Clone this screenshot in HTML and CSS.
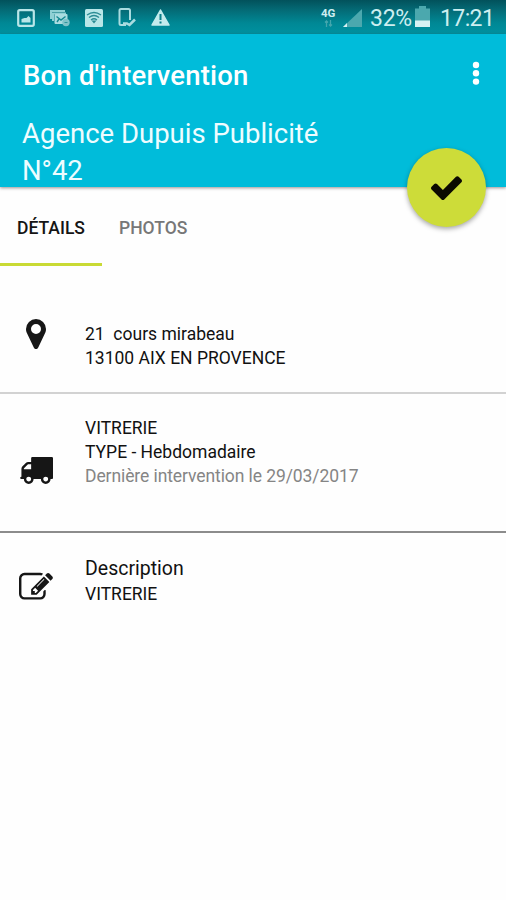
FILE: index.html
```html
<!DOCTYPE html>
<html lang="fr">
<head>
<meta charset="utf-8">
<title>Bon d'intervention</title>
<link rel="stylesheet" href="styles.css">
</head>
<body>
<div class="status">
  <div class="status-left">
    <svg width="18" height="18" viewBox="0 0 18 18"><rect x="1.2" y="1.2" width="15.6" height="15.6" rx="1.5" fill="none" stroke="#b9e6e8" stroke-width="2.2"/><path d="M4.500 13.500V10l3-1 2 0 2-2 2 2v4.500z" fill="#b9e6e8"/></svg>
    <svg width="20" height="18" viewBox="0 0 20 18"><path d="M1 10V2h14M3 12V4.500H16" fill="none" stroke="#8fd0d4" stroke-width="2"/><rect x="4.500" y="5" width="13" height="10" rx="1" fill="#a9dce0"/><path d="M6.500 7.500l4.500 3.500 4.500-3.500M7 13l2-3" fill="none" stroke="#168891" stroke-width="1.400"/><circle cx="16" cy="13.500" r="3.700" fill="#7fc3c9"/><path d="M14.500 13.500h3" stroke="#2e959d"/></svg>
    <svg width="18" height="18" viewBox="0 0 18 18"><rect width="18" height="18" rx="1.500" fill="#b9e6e8"/><path d="M2 6q7-5 14 0M4 8.500q5-4 10 0M6 11q3-2.500 6 0" fill="none" stroke="#2b8b94" stroke-width="1.300"/><path d="M6.500 11.500h5L9 14.500z" fill="#2b8b94"/></svg>
    <svg width="18" height="19" viewBox="0 0 18 19"><path d="M12 12V2.500Q12 1 10.500 1H3Q1.500 1 1.500 2.500v13Q1.500 17 3 17h5" fill="none" stroke="#a9dce0" stroke-width="2"/><path d="M5 15.500h4l2.500 1.500 5.500-5.500" fill="none" stroke="#a9dce0" stroke-width="2.500"/></svg>
    <svg width="19" height="17" viewBox="0 0 19 17"><path d="M9.500 1L18 16H1z" fill="#c3ebed" stroke="#c3ebed" stroke-width="1.500" stroke-linejoin="round"/><path d="M9.500 5v6M9.500 12.500v2" stroke="#087e89" stroke-width="2"/></svg>
  </div>
  <div class="status-right">
    <div class="network"><span>4G</span><svg width="9" height="7" viewBox="0 0 9 7"><path d="M2.500 7V1M1 2.500L2.500 1 4 2.500M6.500 0v6M5 4.500L6.500 6 8 4.500" fill="none" stroke="#43a6ad" stroke-width="1.300"/></svg></div>
    <svg class="signal" width="19" height="18" viewBox="0 0 19 18"><path d="M0 18L19 0v18z" fill="#4ba8ae"/><path d="M0 18l4-4v4z" fill="#d6f2f3"/></svg>
    <span class="percent">32%</span>
    <svg class="battery" width="15" height="21" viewBox="0 0 15 21"><path d="M0 2.500h4V0h7v2.500h4V21H0z" fill="#4ba8ae"/><path d="M0 14.500h15V21H0z" fill="#d6f2f3"/></svg>
    <span class="clock">17:21</span>
  </div>
</div>
<header class="appbar">
  <div class="toolbar">
    <h1 class="title">Bon d'intervention</h1>
    <svg class="more" width="8" height="24" viewBox="0 0 8 24" fill="#fff"><circle cx="4" cy="4" r="3.200"/><circle cx="4" cy="12.300" r="3.200"/><circle cx="4" cy="20.600" r="3.200"/></svg>
  </div>
  <div class="client"><span class="client-name">Agence Dupuis Publicité</span><br><span class="client-number">N°42</span></div>
  <div class="fab"><svg width="31" height="25" viewBox="121 270 1550 1252"><path d="M1671 566q0 40-28 68l-724 724-136 136q-28 28-68 28t-68-28l-136-136-362-362q-28-28-28-68t28-68l136-136q28-28 68-28t68 28l294 295 656-657q28-28 68-28t68 28l136 136q28 28 28 68z"/></svg></div>
</header>
<nav class="tabs">
  <div class="tab active"><span>DÉTAILS</span></div>
  <div class="tab"><span>PHOTOS</span></div>
</nav>
<main>
  <section class="row address">
    <div class="icon"><svg width="20" height="30" viewBox="384 128 1024 1536"><path d="M1152 640q0-106-75-181t-181-75-181 75-75 181 75 181 181 75 181-75 75-181zm256 0q0 109-33 179l-364 774q-16 33-47.500 52t-67.500 19-67.500-19-46.500-52l-365-774q-33-70-33-179 0-212 150-362t362-150 362 150 150 362z"/></svg></div>
    <div class="text"><div><span class="street">21&nbsp; cours mirabeau</span></div><div><span class="city">13100 AIX EN PROVENCE</span></div></div>
  </section>
  <section class="row job">
    <div class="icon"><svg width="34" height="27" viewBox="0 256 1792 1408" preserveAspectRatio="none"><path d="M640 1408q0-52-38-90t-90-38-90 38-38 90 38 90 90 38 90-38 38-90zm-384-512h384v-256h-158q-13 0-22 9l-195 195q-9 9-9 22v30zm1280 512q0-52-38-90t-90-38-90 38-38 90 38 90 90 38 90-38 38-90zm256-1088v1024q0 15-4 26.500t-13.500 18.500-16.500 11.500-23.500 6-22.500 2-25.500 0-22.500-.5q0 106-75 181t-181 75-181-75-75-181h-384q0 106-75 181t-181 75-181-75-75-181h-64q-3 0-22.500.5t-25.500 0-22.500-2-23.500-6-16.500-11.500-13.500-18.500-4-26.500q0-26 19-45t45-19v-320q0-8-.5-35t0-38 2.500-34.500 6.500-37 14-30.500 22.500-30l198-198q19-19 50.500-32t58.500-13h160v-192q0-26 19-45t45-19h1024q26 0 45 19t19 45z"/></svg></div>
    <div class="text"><div><span class="trade">VITRERIE</span></div><div><span class="type">TYPE - Hebdomadaire</span></div><div><span class="last">Dernière intervention le 29/03/2017</span></div></div>
  </section>
  <section class="row description">
    <div class="icon"><svg width="34" height="28" viewBox="0 100 1792 1440"><path d="M888 1184l116-116-152-152-116 116v56h96v96h56zm440-720q-16-16-33 1l-350 350q-17 17-1 33t33-1l350-350q17-17 1-33zm80 594v190q0 119-84.500 203.500t-203.500 84.500h-832q-119 0-203.500-84.500t-84.500-203.500v-832q0-119 84.500-203.500t203.500-84.500h832q63 0 117 25 15 7 18 23 3 17-9 29l-49 49q-14 14-32 8-23-6-45-6h-832q-66 0-113 47t-47 113v832q0 66 47 113t113 47h832q66 0 113-47t47-113v-126q0-13 9-22l64-64q15-15 35-7t20 29zm-96-738l288 288-672 672h-288v-288zm444 132l-92 92-288-288 92-92q28-28 68-28t68 28l152 152q28 28 28 68t-28 68z"/></svg></div>
    <div class="text"><div class="heading"><span class="label">Description</span></div><div><span class="trade">VITRERIE</span></div></div>
  </section>
</main>
</body>
</html>
```
FILE: styles.css
```css
* { box-sizing: border-box; }
body { margin: 0; background: #fefefe; color: #111; font-family: Roboto, sans-serif; }
svg { display: block; flex: none; }
.status { height: 34px; display: flex; justify-content: space-between; padding: 0 12px 0 17px; background: linear-gradient(#02515b 0, #046b76 30%, #008895 68%, #0091a0 100%); color: #cdeef0; }
.status-left { display: flex; align-items: center; gap: 15px; padding-top: 1px; }
.status-right { display: flex; align-items: flex-start; }
.network { width: 18px; padding-top: 7px; font-size: 11.500px; font-weight: 700; line-height: 12px; }
.network svg { margin: 1px 0 0 3px; }
.signal { margin: 9px 0 0 4px; }
.percent { margin: 5px 0 0 8px; width: 42px; font-size: 23px; line-height: 27px; letter-spacing: -.3px; }
.battery { margin: 6px 0 0 3px; }
.clock { margin: 5px 0 0 10px; width: 54px; font-size: 23px; line-height: 27px; letter-spacing: -.6px; }
.appbar { position: relative; height: 153px; padding-top: 24px; background: #00bcda; color: #fff; box-shadow: 0 1px 3px rgba(60, 40, 40, .5); }
.toolbar { display: flex; justify-content: space-between; padding: 0 26px 0 23px; }
.title { margin: 0; font-size: 27.500px; font-weight: 500; line-height: 36px; letter-spacing: .2px; white-space: nowrap; }
.more { margin-top: 3px; }
.client { margin: 21px 0 0 22px; font-size: 27.500px; line-height: 37px; color: #eefcff; }
.fab { position: absolute; right: 20px; bottom: -40px; width: 79px; height: 79px; border-radius: 50%; background: #cddc39; display: flex; align-items: center; justify-content: center; box-shadow: 0 2px 5px rgba(0, 0, 0, .35); }
.fab svg { fill: #0b0a00; }
.tabs { display: flex; height: 79px; font-size: 17.500px; font-weight: 500; line-height: 24px; color: #777; }
.tab { width: 102px; padding: 29px 0 0 17px; white-space: nowrap; }
.active { color: #151515; border-bottom: 3px solid #c9da35; }
.row { display: flex; font-size: 17.500px; line-height: 24px; white-space: nowrap; }
.icon { width: 72px; margin-right: 13px; display: flex; justify-content: center; align-items: flex-start; fill: #161616; }
.address { height: 128px; padding-top: 56px; border-bottom: 2px solid #d2d2d2; }
.address .icon { margin-top: -3px; }
.job { height: 139px; padding-top: 22px; border-bottom: 2px solid #8c8c8c; }
.job .icon { padding-top: 41px; }
.description { padding-top: 23px; }
.description .icon { padding: 16px 1px 0 0; }
.heading { margin-bottom: 1px; font-size: 19.500px; line-height: 25px; }
.last { color: #858585; letter-spacing: -.09px; }
```
